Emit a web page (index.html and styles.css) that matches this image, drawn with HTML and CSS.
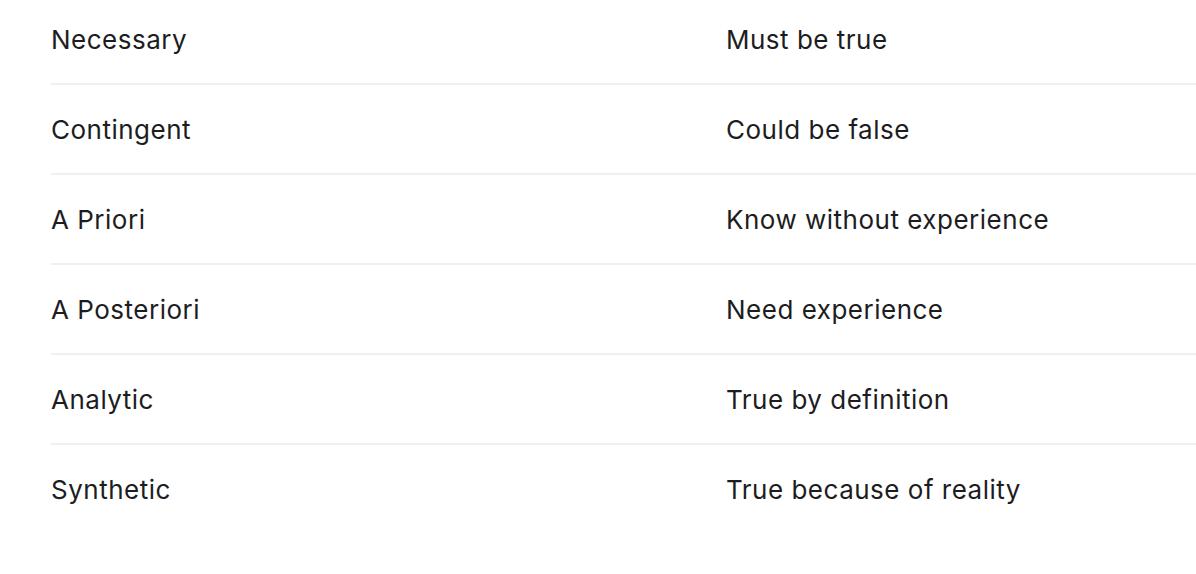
FILE: index.html
```html
<!DOCTYPE html>
<html lang="en">
<head>
<meta charset="utf-8">
<title>Modal terms</title>
<link rel="stylesheet" href="styles.css">
</head>
<body>
<div class="page">
  <div class="table">
    <div class="row"><div class="cell">Necessary</div><div class="cell">Must be true</div></div>
    <div class="row"><div class="cell">Contingent</div><div class="cell">Could be false</div></div>
    <div class="row"><div class="cell">A Priori</div><div class="cell">Know without experience</div></div>
    <div class="row"><div class="cell">A Posteriori</div><div class="cell">Need experience</div></div>
    <div class="row"><div class="cell">Analytic</div><div class="cell">True by definition</div></div>
    <div class="row last"><div class="cell">Synthetic</div><div class="cell">True because of reality</div></div>
  </div>
</div>
</body>
</html>
```

FILE: styles.css
```css
html, body {
  margin: 0;
  padding: 0;
  background: #ffffff;
  overflow: hidden;
}
body {
  width: 1196px;
  height: 574px;
  font-family: Inter, "Noto Sans", sans-serif;
  color: #1d1d1f;
}
.page {
  padding-left: 51px;
  margin-top: -5px;
}
.table {
  width: 1145px;
  display: flex;
  flex-direction: column;
}
.row {
  display: grid;
  grid-template-columns: 675px 1fr;
  height: 88px;
  align-items: center;
  border-bottom: 2px solid #f0f0f0;
}
.row.last {
  border-bottom-color: transparent;
}
.cell {
  font-size: 26px;
  line-height: 32px;
  letter-spacing: 0.5px;
  padding-top: 2px;
  white-space: nowrap;
}
```
